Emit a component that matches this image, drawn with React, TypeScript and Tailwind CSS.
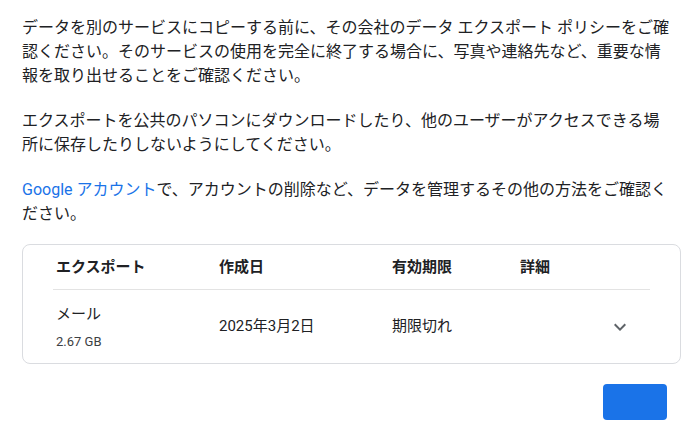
import React from 'react';

const ExpandMore = () => (
  <svg width="24" height="24" viewBox="0 0 24 24" fill="#5f6368">
    <path d="M16.59 8.59L12 13.17 7.41 8.59 6 10l6 6 6-6z" />
  </svg>
);

const App = () => {
  return (
    <div className="w-[693px] h-[442px] overflow-hidden bg-white text-[#202124] font-['Roboto','Noto_Sans_CJK_JP',sans-serif]">
      <div className="pl-[22px] pr-[12px] pt-[16px]">
        {/* Notes */}
        <div className="w-[653px] text-[16px] leading-[24px]">
          <p className="mb-[21px]">
            データを別のサービスにコピーする前に、その会社のデータ エクスポート ポリシーをご確認ください。そのサービスの使用を完全に終了する場合に、写真や連絡先など、重要な情報を取り出せることをご確認ください。
          </p>
          <p className="mb-[21px]">
            エクスポートを公共のパソコンにダウンロードしたり、他のユーザーがアクセスできる場所に保存したりしないようにしてください。
          </p>
          <p>
            <span className="text-[#1a73e8]">Google アカウント</span>で、アカウントの削除など、データを管理するその他の方法をご確認ください。
          </p>
        </div>

        {/* Exports table */}
        <div className="mt-[18px] border border-[#dadce0] rounded-[8px] px-[30px]">
          <div className="grid grid-cols-[163px_173px_128px_1fr] h-[45px] items-center border-b border-[#e3e3e3] text-[15px] font-bold">
            <div className="pl-[3px]">エクスポート</div>
            <div className="pl-[3px]">作成日</div>
            <div className="pl-[3px]">有効期限</div>
            <div className="pl-[3px]">詳細</div>
          </div>
          <div className="grid grid-cols-[163px_173px_128px_1fr] h-[73px] items-center text-[15px]">
            <div className="pl-[3px]">
              <div className="leading-[22px]">メール</div>
              <div className="mt-[8px] text-[13px] leading-[17px] text-[#3c4043]">2.67 GB</div>
            </div>
            <div className="pl-[3px]">2025年3月2日</div>
            <div className="pl-[3px]">期限切れ</div>
            <div className="flex justify-end pr-[18px]">
              <ExpandMore />
            </div>
          </div>
        </div>

        <div className="flex justify-end pr-[14px] mt-[20px]">
          <button className="w-[64px] h-[36px] bg-[#1a73e8] rounded-[4px]" />
        </div>
      </div>
    </div>
  );
};

export default App;
